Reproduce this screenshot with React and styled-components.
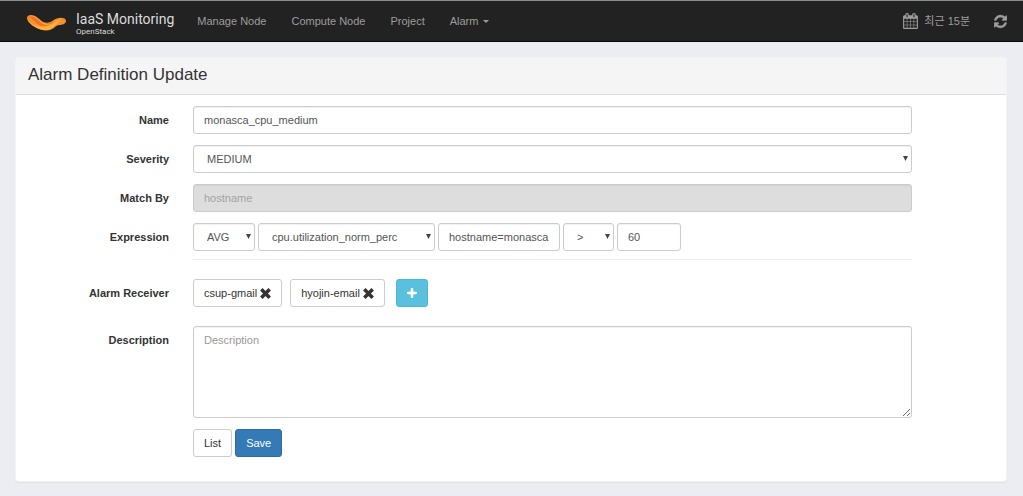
import { useState } from "react";
import styled, { createGlobalStyle, css } from "styled-components";

const GlobalStyle = createGlobalStyle`
  * {
    box-sizing: border-box;
  }

  body {
    margin: 0;
    background: #ebedf2;
    color: #333;
    font-family: "Liberation Sans", Arial, "Noto Sans CJK KR", sans-serif;
    font-size: 11px;
    line-height: 16px;
  }

  button,
  input,
  select,
  textarea {
    font: inherit;
  }
`;

const Header = styled.header`
  display: flex;
  align-items: center;
  height: 42px;
  padding: 0 16px 0 27px;
  background: #222;
  border-top: 1px solid #8a8f8c;
  border-bottom: 1px solid #090909;
`;

const Brand = styled.a`
  display: flex;
  align-items: center;
  gap: 9px;
  margin-right: 23px;
  color: #dcdcdc;
  font-family: Roboto, sans-serif;
  text-decoration: none;
`;

const BrandText = styled.span`
  display: flex;
  flex-direction: column;
  padding-top: 5px;
`;

const BrandName = styled.span`
  font-size: 14px;
  line-height: 16px;
`;

const BrandSub = styled.span`
  font-size: 8px;
  line-height: 10px;
`;

const Nav = styled.nav`
  display: flex;
  flex: 1;
  gap: 25px;
`;

const headerItem = css`
  display: flex;
  align-items: center;
  color: #9d9d9d;
  text-decoration: none;

  &:hover {
    color: #fff;
  }
`;

const NavItem = styled.a`
  ${headerItem}
  gap: 5px;
`;

const HeaderButton = styled.button`
  ${headerItem}
  gap: 6px;
  padding: 0;
  border: 0;
  background: none;
  cursor: pointer;
`;

const Tools = styled.div`
  display: flex;
  gap: 24px;
`;

const Panel = styled.main`
  margin: 15px 16px 14px 15px;
  background: #fff;
  border: 1px solid #f3f3f5;
  border-radius: 4px;
  box-shadow: 0 1px 1px rgba(0, 0, 0, 0.05);
`;

const PanelTitle = styled.h1`
  margin: 0;
  padding: 6px 12px 9px;
  background: #f5f5f5;
  border-bottom: 1px solid #ddd;
  border-radius: 3px 3px 0 0;
  font-size: 17px;
  font-weight: 400;
  line-height: 21px;
`;

const Form = styled.form`
  display: flex;
  flex-direction: column;
  gap: 11px;
  padding: 11px 94px 24px 0;
`;

const Row = styled.div`
  display: grid;
  grid-template-columns: 153px minmax(0, 1fr);
  column-gap: 24px;
`;

const Label = styled.label`
  padding-top: 6px;
  font-weight: 700;
  text-align: right;
`;

const Fields = styled.div`
  grid-column: 2;
  display: flex;
  flex-wrap: wrap;
  gap: ${({ $gap = 3 }) => $gap}px;
`;

const ExpressionFields = styled(Fields)`
  padding-bottom: 8px;
  border-bottom: 1px solid #eee;
`;

const ReceiverRow = styled(Row)`
  padding: 8px 0;
`;

const control = css`
  width: 100%;
  height: 28px;
  padding: 4px 10px;
  color: #555;
  background: #fff;
  border: 1px solid #ccc;
  border-radius: 3px;
  box-shadow: inset 0 1px 1px rgba(0, 0, 0, 0.06);

  &:focus {
    border-color: #66afe9;
    outline: 0;
  }

  &::placeholder {
    color: #999;
  }
`;

const Input = styled.input`
  ${control}
  ${({ $width }) => $width && `width: ${$width}px;`}

  &:disabled {
    color: #a3a3a3;
    background: #ddd;
  }
`;

const TextArea = styled.textarea`
  ${control}
  display: block;
  height: 92px;
  padding-top: 5px;
  resize: vertical;
`;

const SelectBox = styled.div`
  position: relative;
  width: ${({ $width }) => ($width ? `${$width}px` : "100%")};

  svg {
    position: absolute;
    top: 11px;
    right: 4px;
    pointer-events: none;
  }
`;

const StyledSelect = styled.select`
  ${control}
  appearance: none;
  padding-left: 13px;
`;

const Button = styled.button`
  display: flex;
  align-items: center;
  gap: 3px;
  height: 28px;
  padding: 0 10px;
  color: ${({ $color = "#333" }) => $color};
  background: ${({ $bg = "#fff" }) => $bg};
  border: 1px solid ${({ $border = "#ccc" }) => $border};
  border-radius: 3px;
  cursor: pointer;
`;

const AddButton = styled(Button)`
  margin-left: 3px;
`;

function Logo() {
  return (
    <svg width="40" height="20" viewBox="0 -3 40 20" aria-hidden="true">
      <defs>
        <linearGradient id="band" x1="0" x2="1" y1="0" y2="0">
          <stop offset="0" stopColor="#f58a2b" />
          <stop offset="0.5" stopColor="#fba637" />
          <stop offset="1" stopColor="#f28a2c" />
        </linearGradient>
      </defs>
      <path
        d="M0 4C0 1 4 0 8 2c5 2.500 7 7 12 7 4 0 6-3 10-4.500 4-1.500 9-.5 9 2.500 0 3-4 4-7 4-3 .5-4 2-6 3.500-4 3-11 2.500-17-1C4 11 0 7 0 4Z"
        fill="url(#band)"
      />
      <path
        d="M2 3c4-1 7 1 10 4 3 3 6 4.500 10 4-5 2.500-10 1-13-2C6.500 6.500 5 4 2 3Z"
        fill="#ee7326"
      />
      <path
        d="M1 6c4 5 11 8 18 7 6-.5 9-6 15-7-3 2-5 5-8 7-5 4-13 3.500-18 0C4 10.500 1.500 8 1 6Z"
        fill="#ffb945"
        opacity="0.8"
      />
      <path d="M18 8.500c4 1 7-1 10-3-1 3-4 5-7 5-1 0-2-1-3-2Z" fill="#f17d29" />
    </svg>
  );
}

function CalendarIcon() {
  return (
    <svg width="15" height="16" viewBox="0 0 1664 1792" fill="currentColor" aria-hidden="true">
      <path d="M128 1664h288v-288h-288v288zm352 0h320v-288h-320v288zm-352-352h288v-320h-288v320zm352 0h320v-320h-320v320zm-352-384h288v-288h-288v288zm736 736h320v-288h-320v288zm-384-736h320v-288h-320v288zm768 736h288v-288h-288v288zm-384-352h320v-320h-320v320zm-352-864v-288q0-13-9.500-22.500t-22.500-9.500h-64q-13 0-22.500 9.500t-9.500 22.500v288q0 13 9.500 22.500t22.500 9.500h64q13 0 22.500-9.500t9.500-22.500zm736 864h288v-320h-288v320zm-384-384h320v-288h-320v288zm384 0h288v-288h-288v288zm32-480v-288q0-13-9.500-22.500t-22.500-9.500h-64q-13 0-22.500 9.500t-9.500 22.500v288q0 13 9.500 22.500t22.500 9.500h64q13 0 22.500-9.500t9.500-22.500zm384-64v1280q0 52-38 90t-90 38h-1408q-52 0-90-38t-38-90v-1280q0-52 38-90t90-38h128v-96q0-66 47-113t113-47h64q66 0 113 47t47 113v96h384v-96q0-66 47-113t113-47h64q66 0 113 47t47 113v96h128q52 0 90 38t38 90z" />
    </svg>
  );
}

function RefreshIcon() {
  return (
    <svg width="13" height="15" viewBox="0 0 1536 1792" fill="currentColor" aria-hidden="true">
      <path
        d="M1511 1056q0 5-1 7-64 268-268 434.500t-478 166.500q-146 0-282.500-55t-243.500-157l-129 129q-19 19-45 19t-45-19-19-45v-448q0-26 19-45t45-19h448q26 0 45 19t19 45-19 45l-137 137q71 66 161 102t187 36q134 0 250-65t186-179q11-17 53-117 8-23 30-23h192q13 0 22.500 9.500t9.500 22.500zm25-800v448q0 26-19 45t-45 19h-448q-26 0-45-19t-19-45 19-45l138-138q-148-137-349-137-134 0-250 65t-186 179q-11 17-53 117-8 23-30 23h-199q-13 0-22.500-9.500t-9.500-22.500v-7q65-268 270-434.500t480-166.500q146 0 284 55.500t245 156.500l130-129q19-19 45-19t45 19 19 45z"
        stroke="currentColor"
        strokeWidth="40"
      />
    </svg>
  );
}

function RemoveIcon() {
  return (
    <svg width="11" height="11" viewBox="0 0 10 10" aria-hidden="true">
      <path d="M1.200 1.200l7.600 7.600M8.800 1.200L1.200 8.800" stroke="currentColor" strokeWidth="3.200" />
    </svg>
  );
}

function PlusIcon() {
  return (
    <svg width="10" height="10" viewBox="0 0 10 10" aria-hidden="true">
      <path
        d="M5 1.200v7.600M1.200 5h7.600"
        stroke="currentColor"
        strokeWidth="2.600"
        strokeLinecap="round"
      />
    </svg>
  );
}

function Select({ options, width, ...props }) {
  return (
    <SelectBox $width={width}>
      <StyledSelect {...props}>
        {options.map((option) => (
          <option key={option}>{option}</option>
        ))}
      </StyledSelect>
      <svg width="5" height="5" viewBox="0 0 5 5" aria-hidden="true">
        <path d="M0 0h5L2.500 5Z" fill="#444" />
      </svg>
    </SelectBox>
  );
}

export default function App() {
  const [receivers, setReceivers] = useState(["csup-gmail", "hyojin-email"]);

  return (
    <>
      <GlobalStyle />
      <Header>
        <Brand href="#">
          <Logo />
          <BrandText>
            <BrandName>IaaS Monitoring</BrandName>
            <BrandSub>OpenStack</BrandSub>
          </BrandText>
        </Brand>
        <Nav>
          <NavItem href="#manage">Manage Node</NavItem>
          <NavItem href="#compute">Compute Node</NavItem>
          <NavItem href="#project">Project</NavItem>
          <NavItem href="#alarm">
            Alarm
            <svg width="6" height="3" viewBox="0 0 6 3" aria-hidden="true">
              <path d="M0 0h6L3 3Z" fill="currentColor" />
            </svg>
          </NavItem>
        </Nav>
        <Tools>
          <HeaderButton type="button">
            <CalendarIcon />
            최근 15분
          </HeaderButton>
          <HeaderButton type="button" aria-label="Refresh">
            <RefreshIcon />
          </HeaderButton>
        </Tools>
      </Header>

      <Panel>
        <PanelTitle>Alarm Definition Update</PanelTitle>
        <Form onSubmit={(e) => e.preventDefault()}>
          <Row>
            <Label htmlFor="name">Name</Label>
            <Input id="name" defaultValue="monasca_cpu_medium" />
          </Row>
          <Row>
            <Label htmlFor="severity">Severity</Label>
            <Select
              id="severity"
              options={["LOW", "MEDIUM", "HIGH", "CRITICAL"]}
              defaultValue="MEDIUM"
            />
          </Row>
          <Row>
            <Label htmlFor="match-by">Match By</Label>
            <Input id="match-by" defaultValue="hostname" disabled />
          </Row>
          <Row>
            <Label htmlFor="function">Expression</Label>
            <ExpressionFields>
              <Select id="function" width={62} options={["AVG", "MIN", "MAX"]} />
              <Select aria-label="Metric" width={177} options={["cpu.utilization_norm_perc"]} />
              <Input aria-label="Dimension" $width={122} defaultValue="hostname=monasca" />
              <Select aria-label="Operator" width={51} options={[">", ">=", "<", "<="]} />
              <Input aria-label="Threshold" $width={64} defaultValue="60" />
            </ExpressionFields>
          </Row>
          <ReceiverRow>
            <Label htmlFor="add-receiver">Alarm Receiver</Label>
            <Fields $gap={8}>
              {receivers.map((name) => (
                <Button
                  key={name}
                  type="button"
                  onClick={() => setReceivers((list) => list.filter((r) => r !== name))}
                >
                  {name}
                  <RemoveIcon />
                </Button>
              ))}
              <AddButton
                id="add-receiver"
                type="button"
                $color="#fff"
                $bg="#5bc0de"
                $border="#46b8da"
              >
                <PlusIcon />
              </AddButton>
            </Fields>
          </ReceiverRow>
          <Row>
            <Label htmlFor="description">Description</Label>
            <TextArea id="description" placeholder="Description" />
          </Row>
          <Row>
            <Fields>
              <Button type="button">List</Button>
              <Button type="submit" $color="#fff" $bg="#337ab7" $border="#2e6da4">
                Save
              </Button>
            </Fields>
          </Row>
        </Form>
      </Panel>
    </>
  );
}
